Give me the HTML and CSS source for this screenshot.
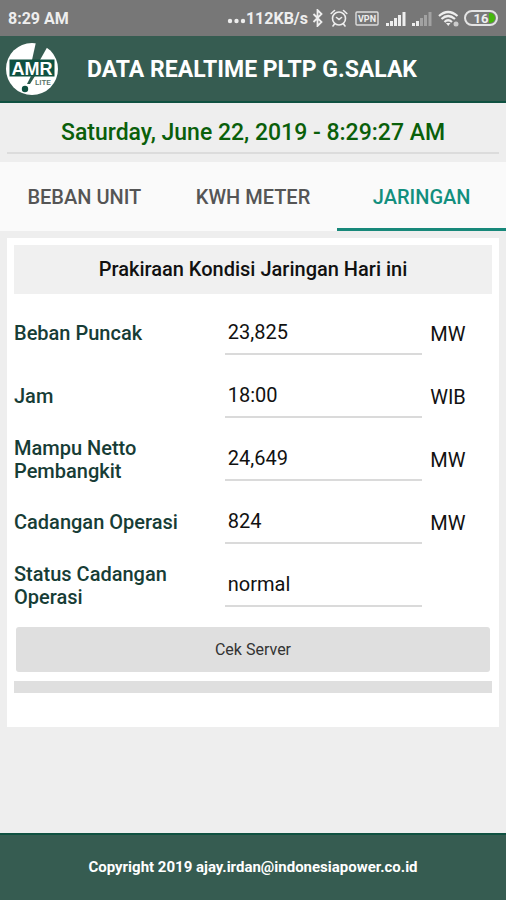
FILE: index.html
```html
<!DOCTYPE html>
<html lang="id">
<head>
<meta charset="utf-8">
<meta name="viewport" content="width=device-width, initial-scale=1">
<title>Data Realtime PLTP G.Salak</title>
<link rel="stylesheet" href="styles.css">
</head>
<body>
<div class="status-bar">
  <span class="clock">8:29 AM</span>
  <div class="status-icons">
    <span class="speed"><svg class="dots" width="19" height="16" viewBox="0 0 19 16"><circle cx="3" cy="13" r="2.2"/><circle cx="9.500" cy="13" r="2.2"/><circle cx="16" cy="13" r="2.2"/></svg>112KB/s</span>
    <svg width="12" height="18" viewBox="0 0 12 18" fill="none" stroke="#eee" stroke-width="1.8"><path d="M1.500 5l8 8-4 4V1l4 4-8 8"/></svg>
    <svg class="alarm" width="18" height="18" viewBox="0 0 18 18" fill="none" stroke="#eee" stroke-width="1.6" stroke-linecap="round"><circle cx="9" cy="9.500" r="6.500"/><path d="M1.200 4.500L4.500 1.500M16.800 4.500L13.500 1.500M6.500 8.500L9 10.500l2.500-2M4.500 15l-1.500 2M13.500 15l1.500 2"/></svg>
    <svg class="vpn" width="24" height="15" viewBox="0 0 24 15"><rect x="1" y="1" width="22" height="13" rx="1" fill="none" stroke="#ddd" stroke-width="1.400"/><text x="12" y="11" text-anchor="middle" font-size="9">VPN</text></svg>
    <svg class="signal" width="20" height="15" viewBox="0 0 20 15" fill="#eee"><path d="M0 12h3v3H0zM4 10h3v5H4zM8 7h3v8H8zM12 4h3v11h-3zM16.500 1h3v14h-3z"/></svg>
    <svg class="signal" width="20" height="15" viewBox="0 0 20 15" fill="#a2a2a2"><path fill="#eee" d="M0 12h3v3H0zM4 10h3v5H4z"/><path d="M8 7h3v8H8zM12 4h3v11h-3zM16.500 1h3v14h-3z"/></svg>
    <svg class="wifi" width="22" height="17" viewBox="0 0 22 17" fill="none" stroke="#eee" stroke-width="2.2"><path d="M1 6Q10 -2 19.500 6M3.500 9Q10 3 17 9M6.500 12Q10 8.500 14 12"/><path d="M8 13h4.500l-2.250 3z" fill="#eee" stroke="none"/><circle cx="18" cy="14" r="2.500" fill="#ccc" stroke="none"/></svg>
    <svg width="34" height="16" viewBox="0 0 34 16"><rect x="1" y="1" width="32" height="14" rx="7" fill="#7a7a7a" stroke="#e4e4e4" stroke-width="2"/><path d="M25 3h1a5 5 0 0 1 0 10h-1z" fill="#45b80c"/><text x="17" y="12.500" text-anchor="middle" font-size="13">16</text></svg>
  </div>
</div>
<header class="app-bar">
  <svg class="logo" width="54" height="54" viewBox="0 0 54 54" role="img" aria-label="AMR Lite">
    <circle cx="27" cy="27" r="26" fill="#fff"/>
    <path d="M31 0L27 18h8L42 5.500L45 0z" fill="#365c51"/>
    <path d="M4.500 17.500h45v17h-45z" fill="#0f5141"/>
    <path d="M26 34h4l-5 8h-3z" fill="#29594c"/>
    <circle cx="20" cy="47" r="3.200" fill="#0f5141"/>
    <text class="logo-name" x="27" y="32.500" text-anchor="middle">AMR</text>
    <text class="logo-sub" x="30" y="43">LITE</text>
  </svg>
  <h1>DATA REALTIME PLTP G.SALAK</h1>
</header>
<main>
  <p class="date">Saturday, June 22, 2019 - 8:29:27 AM</p>
  <nav class="tabs">
    <button type="button">BEBAN UNIT</button>
    <button type="button">KWH METER</button>
    <button type="button" class="active" aria-current="true">JARINGAN</button>
  </nav>
  <section class="card">
    <h2>Prakiraan Kondisi Jaringan Hari ini</h2>
    <form>
      <div class="row"><label for="beban">Beban Puncak</label><input id="beban" type="text" value="23,825"><span>MW</span></div>
      <div class="row"><label for="jam">Jam</label><input id="jam" type="text" value="18:00"><span>WIB</span></div>
      <div class="row"><label for="mampu">Mampu Netto Pembangkit</label><input id="mampu" type="text" value="24,649"><span>MW</span></div>
      <div class="row"><label for="cadangan">Cadangan Operasi</label><input id="cadangan" type="text" value="824"><span>MW</span></div>
      <div class="row"><label for="status">Status Cadangan Operasi</label><input id="status" type="text" value="normal"></div>
      <button type="button" class="check">Cek Server</button>
    </form>
    <div class="divider"></div>
  </section>
</main>
<footer>Copyright 2019 ajay.irdan@indonesiapower.co.id</footer>
</body>
</html>
```
FILE: styles.css
```css
* { box-sizing: border-box; }

body {
  margin: 0;
  min-height: 100vh;
  display: flex;
  flex-direction: column;
  background: #eee;
  color: #111;
  font-family: Roboto, sans-serif;
  font-size: 20px;
}

h1, h2, p { margin: 0; }

button, input {
  border: 0;
  border-radius: 0;
  font: inherit;
  color: inherit;
}

.status-bar {
  height: 36px;
  padding: 0 8px;
  display: flex;
  align-items: center;
  justify-content: space-between;
  background: #777;
  color: #eee;
  font-size: 16px;
  font-weight: 700;
}

.status-icons {
  display: flex;
  align-items: center;
  gap: 4px;
}

.status-icons text {
  fill: #eee;
  font-weight: 700;
}

.dots { fill: #eee; }
.alarm { margin-left: 2px; }
.vpn { margin: 0 3px; }
.signal { margin-right: 2px; }

.app-bar {
  height: 67px;
  padding: 0 5px;
  display: flex;
  align-items: center;
  gap: 28px;
  background: #365c51;
  border-bottom: 2px solid #0f5141;
  color: #fff;
}

.logo-name {
  fill: #fff;
  font-family: "Liberation Sans", sans-serif;
  font-size: 18px;
  font-weight: 700;
}

.logo-sub {
  fill: #526e65;
  font-size: 8px;
  font-weight: 500;
}

h1 {
  padding-top: 2px;
  font-size: 23px;
  font-weight: 700;
}

main { flex: 1; }

.date {
  margin: 0 7px 8px;
  height: 51px;
  padding-top: 16px;
  border-bottom: 2px solid #dcdcdc;
  color: #0a5f0a;
  font-size: 23px;
  font-weight: 500;
  line-height: 28px;
  text-align: center;
}

.tabs {
  display: grid;
  grid-template-columns: repeat(3, 1fr);
  background: #fafafa;
}

.tabs button {
  height: 69px;
  padding: 3px 0 0;
  background: none;
  border-bottom: 3px solid transparent;
  color: #555;
  font-weight: 500;
}

.tabs .active {
  border-color: #17887a;
  color: #128f7e;
}

.card {
  margin: 7px 7px 0;
  padding: 7px 7px 34px;
  background: #fff;
}

h2 {
  margin-bottom: 8px;
  background: #f0f0f0;
  font-size: 20px;
  font-weight: 500;
  line-height: 49px;
  text-align: center;
}

.row {
  min-height: 63px;
  display: grid;
  grid-template-columns: 44fr 42fr 14fr;
  gap: 4px;
  align-items: center;
}

.row label {
  padding-right: 24px;
  color: #173d36;
  font-weight: 500;
  line-height: 23px;
}

.row input {
  width: 100%;
  height: 43px;
  padding: 0 3px 2px;
  background: none;
  border-bottom: 2px solid #dadada;
}

.row span { padding-left: 4px; }

.check {
  display: block;
  width: calc(100% - 4px);
  height: 45px;
  margin: 10px 2px 9px;
  border-radius: 3px;
  background: #dfdfdf;
  color: #333;
  font-size: 16px;
}

.divider {
  height: 12px;
  background: #dfdfdf;
}

footer {
  height: 67px;
  background: #365c51;
  border-top: 2px solid #0f5141;
  color: #fff;
  font-size: 15px;
  font-weight: 700;
  line-height: 65px;
  text-align: center;
}
```
